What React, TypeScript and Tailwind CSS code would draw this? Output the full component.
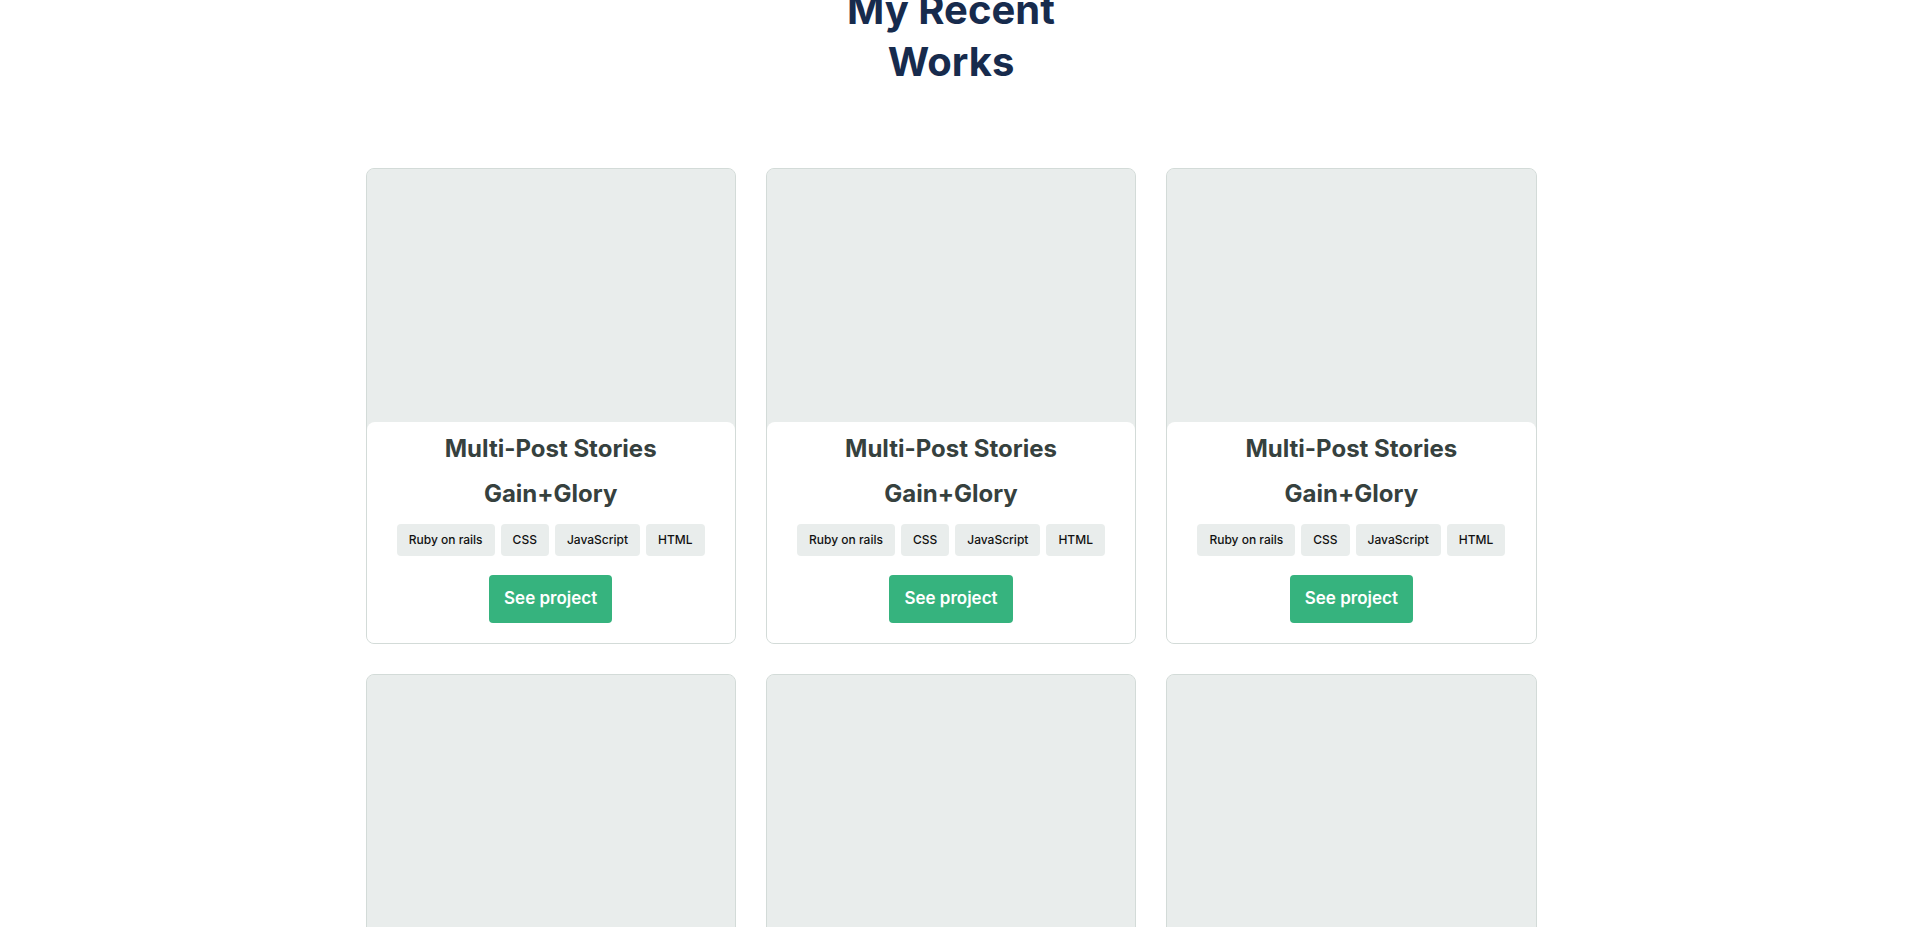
import React from "react";

const tags = ["Ruby on rails", "CSS", "JavaScript", "HTML"];

function Card({ withBody }: { withBody: boolean }) {
  return (
    <div className="flex flex-col overflow-hidden rounded-[8px] border border-[#d3dbd8] bg-[#e9edec]">
      <div className="h-[253px] bg-[#e9edec]" />
      {withBody ? (
        <div className="flex flex-col items-center rounded-t-[8px] bg-white px-4 pb-[20px] pt-[9px]">
          <h3 className="text-[24px] font-bold leading-[36px] text-[#36413e]">Multi-Post Stories</h3>
          <h3 className="mt-[9px] text-[24px] font-bold leading-[36px] text-[#36413e]">Gain+Glory</h3>
          <ul className="mt-[12px] flex gap-[6px]">
            {tags.map((t) => (
              <li
                key={t}
                className="flex h-[32px] items-center rounded-[4px] bg-[#e9edec] px-[12px] text-[12px] font-medium text-[#111111]"
              >
                {t}
              </li>
            ))}
          </ul>
          <button className="mt-[19px] h-[48px] rounded-[4px] bg-[#36b37e] px-[15px] text-[17px] font-semibold text-white">
            See project
          </button>
        </div>
      ) : (
        <div className="h-[222px] bg-[#e9edec]" />
      )}
    </div>
  );
}

export default function App() {
  return (
    <div className="min-h-[1250px] bg-white font-['Inter',sans-serif]">
      <section className="pr-[11px]">
        <h2 className="mx-auto -mt-[16px] w-[300px] text-center text-[40px] font-bold leading-[52px] text-[#172b4d]">
          My Recent Works
        </h2>
        <div className="mx-auto mt-[80px] grid w-[1171px] grid-cols-3 gap-x-[30px] gap-y-[30px]">
          <Card withBody />
          <Card withBody />
          <Card withBody />
          <Card withBody={false} />
          <Card withBody={false} />
          <Card withBody={false} />
        </div>
      </section>
    </div>
  );
}
